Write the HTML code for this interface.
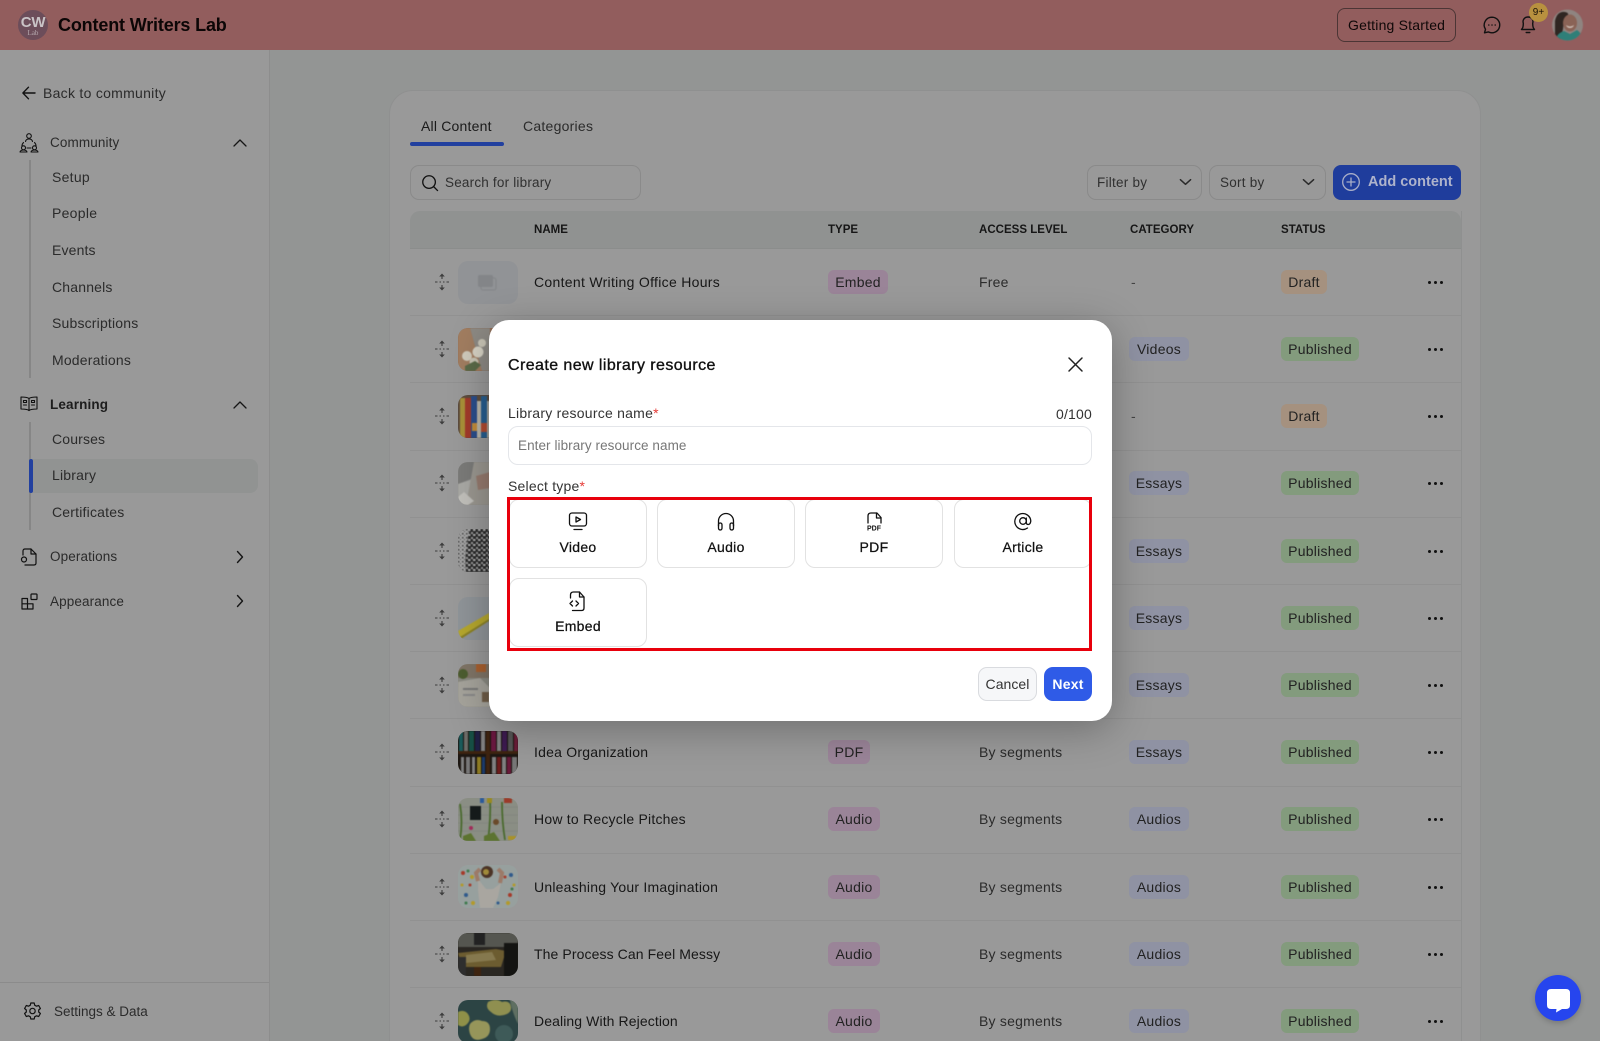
<!DOCTYPE html>
<html lang="en"><head><meta charset="utf-8"><title>Content Writers Lab</title>
<style>
*{box-sizing:border-box;margin:0;padding:0}
html,body{width:1600px;height:1041px;overflow:hidden}
body{position:relative;background:#939594;font-family:"Liberation Sans",sans-serif;color:#1a1a1a;font-size:14px}
.a{position:absolute}
.t{position:absolute;white-space:nowrap;line-height:20px;letter-spacing:.28px}
svg{position:absolute;display:block;overflow:visible}
.ic{fill:none;stroke:#111;stroke-width:1.4;stroke-linecap:round;stroke-linejoin:round}
.side{color:#2b2b2b}
.row{position:absolute;left:410px;width:1051px;height:67.2px;border-bottom:1px solid #919191;background:#999}
.row .nm{position:absolute;left:124px;top:22.8px;line-height:20px;letter-spacing:.22px;white-space:nowrap;color:#171717}
.row .acc{position:absolute;left:569px;top:22.8px;line-height:20px;letter-spacing:.22px;white-space:nowrap;color:#2b2b2b}
.b{position:absolute;top:20.8px;height:24px;line-height:24px;border-radius:6px;text-align:center;letter-spacing:.25px;color:#222;white-space:nowrap}
.ty{left:418px;background:#9a8498}
.ca{left:719px;width:60px;background:#8f92a3}
.st{left:871px;background:#839b7d;width:78px}
.dr{left:871px;background:#a5917f;width:46px}
.dash{position:absolute;left:721px;top:22.8px;line-height:20px;color:#444}
.dots{position:absolute;left:1017.5px;top:31.8px;width:16px;height:3px}
.dots i{position:absolute;top:0;width:3px;height:3px;border-radius:50%;background:#111}
.th{position:absolute;left:48px;top:11.6px;width:60px;height:43px;border-radius:10px;overflow:hidden;background:#888}
.th svg{left:0;top:0;width:60px;height:43px;filter:blur(.5px)}
.dg{left:24px;top:23.8px;width:16px;height:18px}
.hd{position:absolute;top:220px;line-height:20px;font-size:11.5px;font-weight:bold;letter-spacing:.02px;color:#161616;white-space:nowrap}
.sel{position:absolute;top:165px;height:35px;border:1px solid #8a8a8a;border-radius:9px;background:#999}
.card{position:absolute;width:138px;height:69px;border:1px solid #e2e2e2;border-radius:10px;background:#fff;text-align:center}
.card span{position:absolute;left:0;right:0;top:37px;line-height:20px;font-size:14px;letter-spacing:.3px;-webkit-text-stroke:.25px #111;color:#111}
.card svg{left:58px;top:11px;width:20px;height:22px}
</style></head><body>
<svg width="0" height="0" style="position:absolute"><defs>
<symbol id="drag" viewBox="0 0 16 18"><g fill="none" stroke="#3d3d3d" stroke-width="1.1"><path d="M8 2v4M8 12v4"/><path d="M1 9h2.5M5.500 9h1.500M9 9h1.500M12.500 9H15" stroke-width=".9"/></g><path d="M8 .5l2.800 3H5.200zM8 17.500l2.800-3H5.200z" fill="#3d3d3d"/></symbol>
<symbol id="up" viewBox="0 0 14 8"><path d="M1 7l6-6 6 6" fill="none" stroke="#161616" stroke-width="1.3" stroke-linecap="round" stroke-linejoin="round"/></symbol>
<symbol id="rt" viewBox="0 0 8 14"><path d="M1.500 1.500L6.500 7l-5 5.500" fill="none" stroke="#161616" stroke-width="1.4" stroke-linecap="round" stroke-linejoin="round"/></symbol>
<symbol id="dn" viewBox="0 0 14 8"><path d="M1.500 1.500L7 6.500l5.500-5" fill="none" stroke="#2a2a2a" stroke-width="1.600" stroke-linecap="round" stroke-linejoin="round"/></symbol>
</defs></svg>

<!-- top bar -->
<div class="a" style="left:0;top:0;width:1600px;height:50px;background:#925d5d"></div>
<div class="a" style="left:18px;top:10px;width:30px;height:30px;border-radius:50%;background:#6c4d5a"></div>
<div class="t" style="left:18px;top:14px;width:30px;text-align:center;color:#c9c3c6;font-size:15px;font-weight:bold;letter-spacing:-.2px;line-height:17px">CW</div>
<div class="t" style="left:18px;top:28px;width:30px;text-align:center;color:#b6a9af;font-size:7px;letter-spacing:0;line-height:10px;font-family:'Liberation Serif',serif">Lab</div>
<div class="t" style="left:58px;top:15px;font-size:18px;font-weight:bold;letter-spacing:-.16px;color:#0c0606">Content Writers Lab</div>
<div class="a" style="left:1337px;top:8px;width:119px;height:34px;border:1px solid #4c3535;border-radius:8px"></div>
<div class="t" style="left:1348px;top:15px;letter-spacing:.2px;color:#0f0808">Getting Started</div>
<svg class="ic" style="left:1483px;top:16px" width="18" height="18" viewBox="0 0 18 18"><path d="M9 1.200a7.800 7.800 0 1 1-3.700 14.700L1.500 16.800l1-3.500A7.800 7.800 0 0 1 9 1.200z"/><path d="M5.800 9h.01M9 9h.01M12.200 9h.01" stroke-width="1.500"/></svg>
<svg class="ic" style="left:1519px;top:16px" width="18" height="18" viewBox="0 0 18 18"><path d="M2.500 13.500h13c-1.300-1.500-1.800-2.500-1.800-6.300A4.700 4.700 0 0 0 9 1 4.700 4.700 0 0 0 4.300 7.200c0 3.800-.5 4.800-1.800 6.300z"/><path d="M7.200 16.500h3.600"/></svg>
<div class="a" style="left:1529px;top:3px;width:19px;height:19px;border-radius:50%;background:#b8913f;color:#1a1208;font-size:10px;text-align:center;line-height:19px">9+</div>
<svg style="left:1552px;top:9px;filter:blur(.4px)" width="31" height="32" viewBox="0 0 31 32"><defs><clipPath id="av"><circle cx="15.500" cy="16" r="15.500"/></clipPath></defs><g clip-path="url(#av)"><rect width="31" height="32" fill="#8f8480"/><path d="M3 32V12Q5 2 13 3q4 .5 3 4l-4 3-1 10-3 12z" fill="#2f2622"/><ellipse cx="18" cy="14" rx="7" ry="8.500" fill="#8a6356"/><path d="M14 16q4 3 8 0-1 3-4 3t-4-3z" fill="#cdbfb6"/><path d="M3 32q2-8 9-10l6 3 7-4q5 3 6 11z" fill="#2f7f78"/></g></svg>

<!-- sidebar -->
<div class="a" style="left:0;top:50px;width:270px;height:991px;background:#999;border-right:1px solid #8d8d8d"></div>
<svg class="ic" style="left:22px;top:86px" width="14" height="14" viewBox="0 0 14 14"><path d="M13 7H1M6.500 1.200L.9 7l5.600 5.800"/></svg>
<div class="t side" style="left:43px;top:83px;letter-spacing:.28px">Back to community</div>
<svg class="ic" style="left:19px;top:133px;stroke-width:1.100" width="20" height="20" viewBox="0 0 20 20"><circle cx="10" cy="3" r="2.300"/><path d="M6.500 8.500Q7 6 10 6t3.500 2.500M4.500 9.500Q3 11 3 13M15.500 9.500Q17 11 17 13M8 15h4"/><circle cx="4.500" cy="14.800" r="2"/><circle cx="15.500" cy="14.800" r="2"/><path d="M1 19q.5-2 3.500-2t3.500 2zM12 19q.5-2 3.500-2t3.500 2z"/></svg>
<div class="t side" style="left:50px;top:133px;font-size:13.500px;letter-spacing:.12px">Community</div>
<svg style="left:233px;top:139px" width="14" height="8"><use href="#up"/></svg>
<div class="a" style="left:29px;top:160px;width:2px;height:218px;background:#868686"></div>
<div class="t side" style="left:52px;top:167px">Setup</div>
<div class="t side" style="left:52px;top:203px">People</div>
<div class="t side" style="left:52px;top:240px;letter-spacing:.15px">Events</div>
<div class="t side" style="left:52px;top:277px;letter-spacing:.18px">Channels</div>
<div class="t side" style="left:52px;top:313px;letter-spacing:.18px">Subscriptions</div>
<div class="t side" style="left:52px;top:350px;letter-spacing:.18px">Moderations</div>
<svg class="ic" style="left:20px;top:396px;stroke-width:1.100" width="18" height="16" viewBox="0 0 18 16"><path d="M9 2.500Q7 1 1 1v12q6 0 8 1.500 2-1.500 8-1.500V1q-6 0-8 1.500zM9 2.500v12"/><path d="M3.500 4.500h3v2h-3zM11.500 4.500h3v2h-3zM3.500 9h3M11.500 9h3"/></svg>
<div class="t" style="left:50px;top:395px;font-weight:bold;font-size:13.500px;letter-spacing:.15px;color:#1d1d1d">Learning</div>
<svg style="left:233px;top:401px" width="14" height="8"><use href="#up"/></svg>
<div class="a" style="left:29px;top:422px;width:2px;height:108px;background:#868686"></div>
<div class="a" style="left:33px;top:459px;width:225px;height:34px;background:#919392;border-radius:0 8px 8px 0"></div>
<div class="a" style="left:28.500px;top:459px;width:4px;height:34px;background:#22409f;border-radius:2px"></div>
<div class="t side" style="left:52px;top:429px;letter-spacing:.15px">Courses</div>
<div class="t side" style="left:52px;top:465px;letter-spacing:.2px">Library</div>
<div class="t side" style="left:52px;top:502px;letter-spacing:.2px">Certificates</div>
<svg class="ic" style="left:20px;top:548px;stroke-width:1.200" width="17" height="18" viewBox="0 0 17 18"><path d="M3 7V3Q3 1 5 1h6l5 5v9q0 2-2 2H5"/><path d="M11 1v5h5"/><circle cx="4" cy="11.500" r="2.500"/></svg>
<div class="t side" style="left:50px;top:547px;font-size:13.500px;letter-spacing:.12px">Operations</div>
<svg style="left:236px;top:550px" width="8" height="14"><use href="#rt"/></svg>
<svg class="ic" style="left:21px;top:593px;stroke-width:1.200" width="17" height="17" viewBox="0 0 17 17"><path d="M1 5.500h5.500V16H1zM1 10.800h11V16H6.500"/><rect x="10" y="1" width="6" height="5.500" rx=".8"/></svg>
<div class="t side" style="left:50px;top:592px;font-size:13.500px;letter-spacing:.12px">Appearance</div>
<svg style="left:236px;top:594px" width="8" height="14"><use href="#rt"/></svg>
<div class="a" style="left:0;top:982px;width:269px;height:1px;background:#8b8b8b"></div>
<svg class="ic" style="left:24px;top:1002px;stroke-width:1.200" width="17" height="18" viewBox="0 0 17 18"><path d="M6.800 1h3.400l.5 2.200 1.800 1 2.200-.7 1.700 3-1.700 1.500v2l1.700 1.500-1.700 3-2.200-.7-1.800 1-.5 2.200H6.800l-.5-2.200-1.800-1-2.200.7-1.700-3L2.300 10V8L.6 6.500l1.700-3 2.200.7 1.800-1z"/><circle cx="8.500" cy="9" r="2.700"/></svg>
<div class="t side" style="left:54px;top:1002px;font-size:13.500px;letter-spacing:0">Settings &amp; Data</div>

<!-- content card -->
<div class="a" style="left:389px;top:90px;width:1092px;height:1000px;background:#999;border:1px solid #8f9090;border-radius:24px"></div>
<div class="t" style="left:421px;top:116px;letter-spacing:.2px">All Content</div>
<div class="a" style="left:410px;top:142px;width:94px;height:3.500px;background:#22409f;border-radius:2px"></div>
<div class="t side" style="left:523px;top:116px;letter-spacing:.25px">Categories</div>
<div class="sel" style="left:410px;width:231px"></div>
<svg class="ic" style="left:422px;top:175px;stroke-width:1.400" width="16" height="16" viewBox="0 0 17 17"><circle cx="7.500" cy="7.500" r="6.700"/><path d="M12.500 12.500l4 4"/></svg>
<div class="t" style="left:445px;top:173px;color:#303030;font-size:13.500px;letter-spacing:.2px">Search for library</div>
<div class="sel" style="left:1087px;width:115px"></div>
<div class="t" style="left:1097px;top:173px;color:#303030;font-size:13.500px;letter-spacing:.25px">Filter by</div>
<svg style="left:1179px;top:178px" width="13" height="8" viewBox="0 0 14 8"><use href="#dn"/></svg>
<div class="sel" style="left:1209px;width:117px"></div>
<div class="t" style="left:1220px;top:173px;color:#303030;font-size:13.500px;letter-spacing:.25px">Sort by</div>
<svg style="left:1302px;top:178px" width="13" height="8" viewBox="0 0 14 8"><use href="#dn"/></svg>
<div class="a" style="left:1333px;top:165px;width:128px;height:35px;background:#1f3d9c;border-radius:8px"></div>
<svg style="left:1342px;top:173px" width="18" height="18" viewBox="0 0 18 18" fill="none" stroke="#a8aec8" stroke-width="1.300" stroke-linecap="round"><circle cx="9" cy="9" r="8.300"/><path d="M9 5v8M5 9h8"/></svg>
<div class="t" style="left:1368px;top:172px;color:#aeb3cb;font-weight:bold;font-size:14.500px;letter-spacing:0">Add content</div>

<!-- table header -->
<div class="a" style="left:410px;top:211px;width:1051px;height:38px;background:#909291;border-radius:10px 10px 0 0;border-bottom:1px solid #8b8d8c"></div>
<div class="hd" style="left:534px">NAME</div>
<div class="hd" style="left:828px">TYPE</div>
<div class="hd" style="left:979px">ACCESS LEVEL</div>
<div class="hd" style="left:1130px">CATEGORY</div>
<div class="hd" style="left:1281px">STATUS</div>

<!-- rows -->
<div class="row" style="top:249px"><svg class="dg"><use href="#drag"/></svg>
<div class="th" style="background:#919396"><svg viewBox="0 0 60 43"><rect x="20" y="14" width="15" height="12" rx="2" fill="#838588"/><rect x="23" y="17" width="15" height="12" rx="2" fill="none" stroke="#838588" stroke-width="1"/></svg></div>
<div class="nm" style="letter-spacing:.3px">Content Writing Office Hours</div>
<div class="b ty" style="width:60px">Embed</div><div class="acc">Free</div><div class="dash">-</div><div class="b dr">Draft</div><div class="dots"><i style="left:0"></i><i style="left:6px"></i><i style="left:12px"></i></div></div>

<div class="row" style="top:316.200px"><svg class="dg"><use href="#drag"/></svg>
<div class="th" style="background:#8f6a52"><svg viewBox="0 0 60 43"><path d="M0 0h12l12 43H0z" fill="#a17d60"/><path d="M12 0h20v43H24z" fill="#8d8a84"/><circle cx="9" cy="28" r="5" fill="#cfcabb"/><circle cx="20" cy="24" r="5.500" fill="#d6d2c4"/><circle cx="16" cy="34" r="4.500" fill="#c8c4b4"/><circle cx="24" cy="15" r="4" fill="#c9c5b6"/><path d="M7 38l10-5 6 4-6 6H7z" fill="#5a6a48"/></svg></div>
<div class="nm"></div><div class="b ca" style="left:719px">Videos</div><div class="b st">Published</div><div class="dots"><i style="left:0"></i><i style="left:6px"></i><i style="left:12px"></i></div></div>

<div class="row" style="top:383.400px"><svg class="dg"><use href="#drag"/></svg>
<div class="th" style="background:#5c4c3e"><svg viewBox="0 0 60 43"><rect x="2" y="3" width="5" height="40" fill="#a89038"/><rect x="7" y="3" width="6" height="40" fill="#a13a2a"/><rect x="13" y="1" width="6" height="42" fill="#2a4d8a"/><rect x="19" y="6" width="4" height="37" fill="#b8b4a8"/><rect x="23" y="1" width="6" height="42" fill="#265d8e"/><rect x="29" y="6" width="5" height="37" fill="#a8a69c"/><rect x="14" y="28" width="5" height="8" fill="#c08a3a"/><rect x="23" y="28" width="6" height="9" fill="#b04a30"/></svg></div>
<div class="nm"></div><div class="dash">-</div><div class="b dr">Draft</div><div class="dots"><i style="left:0"></i><i style="left:6px"></i><i style="left:12px"></i></div></div>

<div class="row" style="top:450.600px"><svg class="dg"><use href="#drag"/></svg>
<div class="th" style="background:#8a8a88"><svg viewBox="0 0 60 43"><path d="M0 0h16l4 14-20 8z" fill="#7a7a78"/><path d="M0 22l18-6 4 20-14 7H0z" fill="#a8a8a4"/><path d="M16 0h16v43H8z" fill="#99968f"/><path d="M18 14l14-4v16l-12 2z" fill="#957a6e"/><path d="M6 30l10 9-6 4H0v-8z" fill="#c0bfba"/></svg></div>
<div class="nm"></div><div class="b ca">Essays</div><div class="b st">Published</div><div class="dots"><i style="left:0"></i><i style="left:6px"></i><i style="left:12px"></i></div></div>

<div class="row" style="top:517.800px"><svg class="dg"><use href="#drag"/></svg>
<div class="th" style="background:#8c8c8c"><svg viewBox="0 0 60 43"><defs><pattern id="nz" width="5" height="5" patternUnits="userSpaceOnUse"><rect width="5" height="5" fill="#2a2a2a"/><rect x="0" y="0" width="2.500" height="2" fill="#b0b0b0"/><rect x="3" y="3" width="2" height="2" fill="#a0a0a0"/></pattern><pattern id="nz2" width="4" height="4" patternUnits="userSpaceOnUse"><rect width="4" height="4" fill="#a5a5a5"/><rect x="0" y="0" width="1.500" height="1.500" fill="#444"/><rect x="2" y="2" width="1" height="1" fill="#555"/></pattern></defs><rect width="60" height="43" fill="url(#nz)"/><path d="M0 0h12Q6 20 8 43H0z" fill="url(#nz2)"/></svg></div>
<div class="nm"></div><div class="b ca">Essays</div><div class="b st">Published</div><div class="dots"><i style="left:0"></i><i style="left:6px"></i><i style="left:12px"></i></div></div>

<div class="row" style="top:585px"><svg class="dg"><use href="#drag"/></svg>
<div class="th" style="background:#8f9498"><svg viewBox="0 0 60 43"><path d="M0 34L31 16v6L2 40z" fill="#b5a72d"/><path d="M2 40L31 22v2L3 42z" fill="#8c8222"/></svg></div>
<div class="nm"></div><div class="b ca">Essays</div><div class="b st">Published</div><div class="dots"><i style="left:0"></i><i style="left:6px"></i><i style="left:12px"></i></div></div>

<div class="row" style="top:652.200px"><svg class="dg"><use href="#drag"/></svg>
<div class="th" style="background:#8a8a82"><svg viewBox="0 0 60 43"><rect width="60" height="14" fill="#7f7466"/><circle cx="5" cy="10" r="5" fill="#4c5d30"/><path d="M0 18l22-4 10 10v19H0z" fill="#a5a39b"/><rect x="5" y="24" width="15" height="2" fill="#777"/><rect x="5" y="30" width="12" height="2" fill="#888"/><path d="M18 0h10v8H18z" fill="#a85f2e"/><rect x="24" y="28" width="7" height="10" fill="#6f5d48"/></svg></div>
<div class="nm"></div><div class="b ca">Essays</div><div class="b st">Published</div><div class="dots"><i style="left:0"></i><i style="left:6px"></i><i style="left:12px"></i></div></div>

<div class="row" style="top:719.400px"><svg class="dg"><use href="#drag"/></svg>
<div class="th" style="background:#1d1712"><svg viewBox="0 0 60 43"><rect x="1" y="0" width="4" height="20" fill="#1a5a5a"/><rect x="6" y="0" width="4" height="20" fill="#6c6c68"/><rect x="11" y="0" width="5" height="20" fill="#174f45"/><rect x="17" y="0" width="5" height="20" fill="#1f1f44"/><rect x="23" y="0" width="4" height="20" fill="#808080"/><rect x="33" y="0" width="5" height="20" fill="#6a1840"/><rect x="39" y="0" width="4" height="20" fill="#808080"/><rect x="44" y="0" width="5" height="20" fill="#3d1a50"/><rect x="50" y="0" width="5" height="20" fill="#555"/><rect x="56" y="0" width="4" height="20" fill="#6a1c38"/><rect y="20" width="60" height="3" fill="#3e2410"/><rect x="28" y="0" width="4" height="43" fill="#3e2410"/><rect x="3" y="26" width="3" height="17" fill="#808080"/><rect x="8" y="26" width="4" height="17" fill="#777"/><rect x="14" y="26" width="3" height="17" fill="#808080"/><rect x="19" y="26" width="4" height="17" fill="#8c7a22"/><rect x="24" y="26" width="3" height="17" fill="#1a3a6a"/><rect x="34" y="26" width="4" height="17" fill="#808080"/><rect x="39" y="26" width="4" height="17" fill="#6c1c1c"/><rect x="44" y="26" width="4" height="17" fill="#808080"/><rect x="49" y="26" width="4" height="17" fill="#6a1a3a"/><rect x="54" y="26" width="5" height="17" fill="#777"/></svg></div>
<div class="nm">Idea Organization</div><div class="b ty" style="width:42px">PDF</div><div class="acc">By segments</div><div class="b ca">Essays</div><div class="b st">Published</div><div class="dots"><i style="left:0"></i><i style="left:6px"></i><i style="left:12px"></i></div></div>

<div class="row" style="top:786.600px"><svg class="dg"><use href="#drag"/></svg>
<div class="th" style="background:#8a8e84"><svg viewBox="0 0 60 43"><g stroke="#7c807a" stroke-width=".5"><path d="M0 9h60M0 17h60M0 25h60M0 33h60"/></g><rect x="12" y="8" width="11" height="14" fill="#151a1a"/><path d="M2 6q3 18 0 36M32 0q1 20-2 43M44 4q0 20 3 38" stroke="#4a6a2e" stroke-width="1.800" fill="none"/><rect x="29" y="0" width="5" height="5" fill="#9a8a20"/><rect x="22" y="0" width="4" height="5" fill="#2a5a9a"/><rect x="46" y="0" width="8" height="5" fill="#9a3a2a"/><circle cx="13" cy="30" r="2" fill="#a02c5a"/><circle cx="38" cy="24" r="3" fill="#6a4a2a"/><path d="M5 38l8-3 5 8H5zM26 38l10-4 6 9H26z" fill="#5c7330"/><rect x="50" y="38" width="8" height="4" fill="#a8922a"/></svg></div>
<div class="nm">How to Recycle Pitches</div><div class="b ty" style="width:52px">Audio</div><div class="acc">By segments</div><div class="b ca">Audios</div><div class="b st">Published</div><div class="dots"><i style="left:0"></i><i style="left:6px"></i><i style="left:12px"></i></div></div>

<div class="row" style="top:853.800px"><svg class="dg"><use href="#drag"/></svg>
<div class="th" style="background:#97a09e"><svg viewBox="0 0 60 43"><path d="M20 14l8 10 7 0 8-6-3 14-5 11H22l-2-18z" fill="#a9a6a0"/><path d="M20 16l-2-8 4-4M42 18l2-10-4-4" stroke="#9c7a68" stroke-width="4" fill="none"/><circle cx="29" cy="7" r="6" fill="#4c3426"/><circle cx="28" cy="7" r="3" fill="#a08a3a"/><g fill="#a53a2a"><circle cx="5" cy="8" r="2"/><circle cx="12" cy="20" r="1.500"/><circle cx="52" cy="30" r="2"/><circle cx="47" cy="12" r="1.500"/></g><g fill="#2f5a8c"><circle cx="53" cy="10" r="2"/><circle cx="8" cy="30" r="2"/><circle cx="40" cy="38" r="1.500"/></g><g fill="#b39a2a"><circle cx="14" cy="12" r="2"/><circle cx="4" cy="20" r="1.500"/><circle cx="56" cy="20" r="1.500"/><circle cx="15" cy="38" r="2"/><circle cx="50" cy="38" r="2"/></g><g fill="#3d7a4c"><circle cx="10" cy="6" r="1.500"/><circle cx="54" cy="24" r="1.500"/><circle cx="8" cy="38" r="1.500"/></g></svg></div>
<div class="nm">Unleashing Your Imagination</div><div class="b ty" style="width:52px">Audio</div><div class="acc">By segments</div><div class="b ca">Audios</div><div class="b st">Published</div><div class="dots"><i style="left:0"></i><i style="left:6px"></i><i style="left:12px"></i></div></div>

<div class="row" style="top:921px"><svg class="dg"><use href="#drag"/></svg>
<div class="th" style="background:#2a2722"><svg viewBox="0 0 60 43"><rect width="60" height="14" fill="#555650"/><rect x="16" y="0" width="11" height="12" fill="#222"/><path d="M0 20l38-4 10 2-5 16H4z" fill="#6c5c30"/><path d="M8 22l26-3 4 8-30 3z" fill="#85784e"/><rect x="16" y="34" width="7" height="9" fill="#3e2410"/><rect x="46" y="10" width="14" height="33" fill="#141412"/><path d="M0 24h8v19H0z" fill="#2e2e2e"/></svg></div>
<div class="nm" style="letter-spacing:.1px">The Process Can Feel Messy</div><div class="b ty" style="width:52px">Audio</div><div class="acc">By segments</div><div class="b ca">Audios</div><div class="b st">Published</div><div class="dots"><i style="left:0"></i><i style="left:6px"></i><i style="left:12px"></i></div></div>

<div class="row" style="top:988.200px"><svg class="dg"><use href="#drag"/></svg>
<div class="th" style="background:#2c4444"><svg viewBox="0 0 60 43"><path d="M30 2q8-4 14 0 8-2 9 5 1 6-7 8-8 2-13-3-6-4-3-10z" fill="#8f8f50"/><path d="M0 12q6-3 10 2 4 6-2 11-4 3-8 0z" fill="#8f9048"/><path d="M12 24q5-6 12-3 8 0 8 8 0 8-8 10-9 3-12-5-2-6 0-10z" fill="#96955a"/><path d="M52 0h8v24q-6-12-8-24z" fill="#5f6f62"/><circle cx="46" cy="34" r="9" fill="#3e5a58"/></svg></div>
<div class="nm" style="letter-spacing:.1px">Dealing With Rejection</div><div class="b ty" style="width:52px">Audio</div><div class="acc">By segments</div><div class="b ca">Audios</div><div class="b st">Published</div><div class="dots"><i style="left:0"></i><i style="left:6px"></i><i style="left:12px"></i></div></div>

<div class="a" style="left:1461px;top:211px;width:1px;height:830px;background:#8f9090"></div>

<!-- chat launcher -->
<div class="a" style="left:1535px;top:975px;width:46px;height:46px;border-radius:50%;background:#2645ee;box-shadow:0 2px 6px rgba(0,0,0,.2)"></div>
<svg style="left:1547px;top:989px" width="23" height="24" viewBox="0 0 23 24"><path d="M4 0h15q4 0 4 4v12q0 4-4 4h-4l-6 3.500.5-3.500H4q-4 0-4-4V4q0-4 4-4z" fill="#fff"/></svg>

<!-- modal -->
<div class="a" style="left:489px;top:320px;width:623px;height:401px;background:#fff;border-radius:20px;box-shadow:0 8px 40px rgba(0,0,0,.28)"></div>
<div class="t" style="left:508px;top:355.500px;font-size:16px;letter-spacing:.42px;-webkit-text-stroke:.35px #111;color:#111">Create new library resource</div>
<svg style="left:1068px;top:357px" width="15" height="15" viewBox="0 0 15 15" fill="none" stroke="#222" stroke-width="1.500" stroke-linecap="round"><path d="M1 1l13 13M14 1L1 14"/></svg>
<div class="t" style="left:508px;top:403px;color:#333;letter-spacing:.24px">Library resource name<span style="color:#e53935">*</span></div>
<div class="t" style="right:508px;top:404px;color:#333;letter-spacing:.2px;font-size:14px">0/100</div>
<div class="a" style="left:508px;top:426px;width:584px;height:39px;border:1px solid #e4e6ea;border-radius:10px"></div>
<div class="t" style="left:518px;top:436px;color:#777;font-size:13.500px;letter-spacing:.07px">Enter library resource name</div>
<div class="t" style="left:508px;top:476px;color:#333;letter-spacing:.2px">Select type<span style="color:#e53935">*</span></div>

<div class="card" style="left:509px;top:499px"><svg viewBox="0 0 20 22" class="ic" style="stroke-width:1.300"><rect x="1.500" y="2" width="17" height="13" rx="2.500"/><path d="M8 6l4.500 2.500L8 11z"/><path d="M6 18.500h8"/></svg><span>Video</span></div>
<div class="card" style="left:657px;top:499px"><svg viewBox="0 0 20 22" class="ic" style="stroke-width:1.300;left:58px"><path d="M2.500 15V10a7.500 7.500 0 0 1 15 0v5"/><rect x="2.500" y="12" width="3.500" height="7" rx="1.700"/><rect x="14" y="12" width="3.500" height="7" rx="1.700"/></svg><span>Audio</span></div>
<div class="card" style="left:805px;top:499px"><svg viewBox="0 0 20 22" class="ic" style="stroke-width:1.300"><path d="M4 12V5q0-3 3-3h6l4 4.500V12"/><path d="M12.500 2v5H17"/><text x="10" y="19.500" text-anchor="middle" font-family="Liberation Sans" font-size="7" font-weight="bold" fill="#111" stroke="none">PDF</text></svg><span>PDF</span></div>
<div class="card" style="left:954px;top:499px"><svg viewBox="0 0 20 22" class="ic" style="stroke-width:1.300"><circle cx="10" cy="10" r="3.300"/><path d="M13.300 7v4.500q0 2 2 2t2.500-3.500A8 8 0 1 0 14.500 17"/></svg><span>Article</span></div>
<div class="card" style="left:509px;top:578px"><svg viewBox="0 0 20 22" class="ic" style="stroke-width:1.300;left:57px"><path d="M3.500 8V5q0-3 3-3h6l4.500 5v11q0 2.500-2.500 2.500H5.500"/><path d="M12.500 2v5H17"/><path d="M5.500 11L3 13.500 5.500 16M9 11l2.500 2.500L9 16"/></svg><span>Embed</span></div>

<div class="a" style="left:507px;top:497px;width:585px;height:154px;border:3px solid #e8000c"></div>

<div class="a" style="left:978px;top:667px;width:59px;height:34px;background:#f6f7f9;border:1px solid #d9dbdf;border-radius:9px"></div>
<div class="t" style="left:978px;top:674px;width:59px;text-align:center;color:#333;letter-spacing:.05px">Cancel</div>
<div class="a" style="left:1044px;top:667px;width:48px;height:34px;background:#2f5be7;border-radius:9px"></div>
<div class="t" style="left:1044px;top:674px;width:48px;text-align:center;color:#fff;font-weight:bold;letter-spacing:.2px">Next</div>
</body></html>
